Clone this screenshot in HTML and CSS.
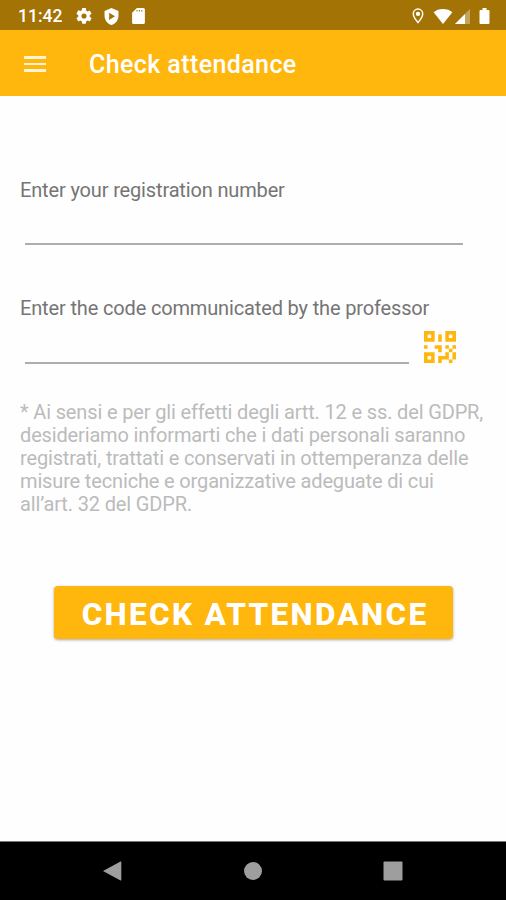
FILE: index.html
```html
<!DOCTYPE html>
<html lang="en">
<head>
  <meta charset="UTF-8">
  <meta name="viewport" content="width=device-width, initial-scale=1.0">
  <title>Check attendance</title>
  <link rel="stylesheet" href="styles.css">
</head>
<body>
<div class="status-bar">
  <span class="time">11:42</span>
  <svg class="settings" viewBox="2 2 20 20"><path fill-rule="evenodd" d="M19.14 12.94c.04-.3.06-.61.06-.94s-.02-.64-.07-.94l2.03-1.58a.49.49 0 0 0 .12-.61l-1.92-3.32a.49.49 0 0 0-.59-.22l-2.39.96a7 7 0 0 0-1.62-.94l-.36-2.54A.48.48 0 0 0 13.92 2h-3.84a.48.48 0 0 0-.47.41l-.36 2.54c-.59.24-1.13.57-1.62.94l-2.39-.96a.48.48 0 0 0-.59.22L2.74 8.87a.48.48 0 0 0 .12.61l2.03 1.58a6 6 0 0 0 0 1.88l-2.03 1.58a.49.49 0 0 0-.12.61l1.92 3.32c.12.22.37.29.59.22l2.39-.96c.5.38 1.03.7 1.62.94l.36 2.54c.05.24.24.41.48.41h3.84c.24 0 .44-.17.47-.41l.36-2.54a7 7 0 0 0 1.62-.94l2.39.96c.22.08.47 0 .59-.22l1.92-3.32a.48.48 0 0 0-.12-.61zM12 15.2a3.2 3.2 0 1 1 0-6.4 3.2 3.2 0 0 1 0 6.4z"/></svg>
  <svg class="shield" viewBox="3 1 18 22"><path fill-rule="evenodd" d="M12 1 3 5v6c0 5.55 3.84 10.74 9 12 5.16-1.26 9-6.45 9-12V5zM9 7l7.500 4.700-7.500 4.800z"/></svg>
  <svg class="sd-card" viewBox="4 2 16 20"><path fill-rule="evenodd" d="M18 2h-8L4 8v12a2 2 0 0 0 2 2h12a2 2 0 0 0 2-2V4a2 2 0 0 0-2-2zM9.500 4.500h1.300v2H9.500zM12.500 4.500h1.300v2h-1.300zM15.500 4.500h1.300v2h-1.300z"/></svg>
  <svg class="location" viewBox="4 1 16 22"><path d="M12 2.500a6.500 6.500 0 0 0-6.500 6.500c0 4.700 6.500 12 6.500 12s6.500-7.300 6.500-12A6.500 6.500 0 0 0 12 2.500z" fill="none" stroke="#fff" stroke-width="2"/><circle cx="12" cy="9" r="3"/></svg>
  <svg class="wifi" viewBox="0 0 20 16"><path d="M10 16 0 3.500C2.500 1.300 6 0 10 0s7.500 1.300 10 3.500z"/></svg>
  <svg class="signal" viewBox="0 0 15 15"><path d="M0 15 15 0v15z" opacity=".35"/><path d="M0 15 10 5v10z"/></svg>
  <svg class="battery" viewBox="0 0 10 16"><path d="M3 0h4v2h2a1 1 0 0 1 1 1v12a1 1 0 0 1-1 1H1a1 1 0 0 1-1-1V3a1 1 0 0 1 1-1h2z"/></svg>
</div>
<header class="app-bar">
  <button class="menu" aria-label="Menu"><span></span><span></span><span></span></button>
  <h1>Check attendance</h1>
</header>
<main>
  <label for="number">Enter your registration number</label>
  <input type="text" id="number">
  <label for="code" class="code-label">Enter the code communicated by the professor</label>
  <div class="code-row">
    <input type="text" id="code">
    <svg class="qr-code" viewBox="3 3 18 18"><path fill-rule="evenodd" d="M3 11h2v2H3zM11 5h2v4h-2zM9 11h4v4h-2v-2H9zM15 11h2v2h2v-2h2v2h-2v2h2v4h-2v2h-2v-2h-4v2h-2v-4h4v-2h2v-2h-2zM19 19v-4h-2v4zM15 3h6v6h-6zM17 5v2h2V5zM3 3h6v6H3zM5 5v2h2V5zM3 15h6v6H3zM5 17v2h2v-2z"/></svg>
  </div>
  <p class="privacy" lang="it">* Ai sensi e per gli effetti degli artt. 12 e ss. del GDPR,<br>desideriamo informarti che i dati personali saranno<br>registrati, trattati e conservati in ottemperanza delle<br>misure tecniche e organizzative adeguate di cui<br>all’art. 32 del GDPR.</p>
  <button class="submit">CHECK ATTENDANCE</button>
</main>
<nav class="nav-bar">
  <svg viewBox="0 0 20 20"><path d="M0 10 17.500.5a.5.5 0 0 1 .8.5v18a.5.5 0 0 1-.8.5z"/></svg>
  <svg viewBox="0 0 20 20"><circle cx="10" cy="10" r="9"/></svg>
  <svg viewBox="0 0 20 20"><rect x=".5" y=".5" width="19" height="19" rx="1"/></svg>
</nav>
</body>
</html>
```
FILE: styles.css
```css
* {
  box-sizing: border-box;
}

body {
  display: flex;
  flex-direction: column;
  height: 900px;
  margin: 0;
  background: #fefefe;
  color: #757575;
  font-family: Roboto, sans-serif;
  font-size: 20px;
  line-height: 23px;
  letter-spacing: -0.15px;
  overflow: hidden;
}

svg {
  display: block;
  flex: none;
  fill: #fff;
}

button {
  border: none;
  padding: 0;
  font-family: inherit;
}

.status-bar {
  display: flex;
  align-items: center;
  height: 30px;
  padding: 2px 16px 0 18px;
  background: #a37305;
  color: #fff;
}

.time {
  width: 58px;
  font-size: 17.5px;
  font-weight: 500;
  letter-spacing: 0;
}

.settings {
  width: 16px;
  height: 16px;
}

.shield {
  width: 15px;
  height: 17px;
  margin-left: 12px;
}

.sd-card {
  width: 13px;
  height: 16px;
  margin-left: 13px;
}

.location {
  width: 12px;
  height: 16px;
  margin-left: auto;
}

.wifi {
  width: 20px;
  height: 15px;
  margin-left: 9px;
}

.signal {
  width: 15px;
  height: 15px;
  margin-left: 2px;
}

.battery {
  width: 11px;
  height: 16px;
  margin-left: 9px;
}

.app-bar {
  display: flex;
  align-items: center;
  height: 66px;
  padding: 2px 0 0 24px;
  background: #ffb60d;
  color: #fff;
}

.menu {
  display: flex;
  flex-direction: column;
  gap: 4px;
  width: 22px;
  margin-right: 43px;
  background: none;
}

.menu span {
  height: 2.5px;
  background: #fff3d6;
}

h1 {
  margin: 0;
  font-size: 25px;
  font-weight: 500;
  letter-spacing: 0.4px;
}

main {
  display: flex;
  flex: 1;
  flex-direction: column;
  padding: 83px 20px 0;
}

input {
  width: 438px;
  height: 43px;
  margin-left: 5px;
  border: none;
  border-bottom: 2px solid #adadad;
  padding: 0;
  background: none;
  font: inherit;
}

.code-label {
  margin-top: 52px;
}

.code-row {
  display: flex;
  align-items: flex-end;
}

.code-row input {
  width: 384px;
  height: 44px;
}

.qr-code {
  width: 32px;
  height: 32px;
  margin: 0 0 1px 15px;
  fill: #ffb60d;
}

.privacy {
  margin: 37px 0 0;
  color: #bbb;
  white-space: nowrap;
}

.submit {
  width: 399px;
  height: 53px;
  margin: 70px 0 0 34px;
  border-radius: 4px;
  padding: 3px 0 0 3px;
  background: #ffb60d;
  box-shadow: 0 1px 3px rgba(0, 0, 0, 0.35);
  color: #fff;
  font-size: 31.5px;
  font-weight: 800;
  letter-spacing: 2.3px;
  white-space: nowrap;
}

.nav-bar {
  display: flex;
  align-items: center;
  justify-content: center;
  gap: 120px;
  height: 59px;
  border-top: 1px solid #777;
  background: #000;
}

.nav-bar svg {
  width: 20px;
  height: 20px;
  fill: #9e9e9e;
}
```
